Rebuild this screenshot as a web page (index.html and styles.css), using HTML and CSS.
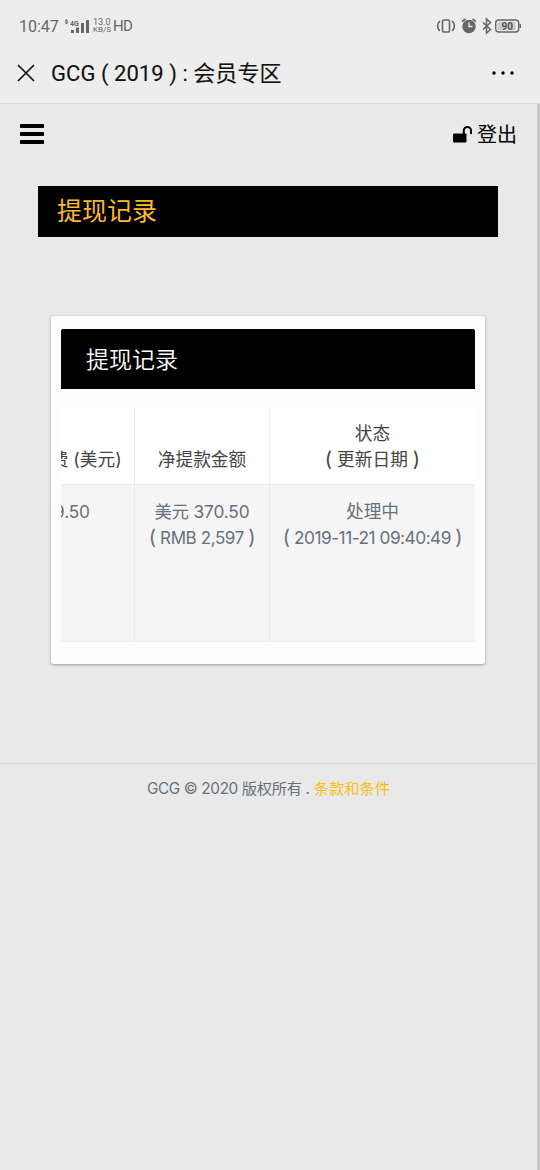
FILE: index.html
```html
<!DOCTYPE html>
<html lang="zh-CN">
<head>
<meta charset="utf-8">
<title>GCG ( 2019 ) : 会员专区</title>
<link rel="stylesheet" href="styles.css">
</head>
<body>
<div class="chrome">
  <div class="status">
    <span class="time">10:47</span>
    <svg class="signal" width="26" height="16" viewBox="0 0 26 16"><path d="M2.500 0 4.500 2.500H.5zM2.500 5.500.5 3.200h4z"/><text x="6" y="6.500">4G</text><path d="M7 11h3v3H7zM12 8.500h3V14h-3zM17 4h3v10h-3zM22 1h3v13h-3z"/></svg>
    <span class="speed"><span class="rate">13.0</span><span>KB/S</span></span>
    <span class="hd">HD</span>
    <svg class="sysicons" width="86" height="18" viewBox="0 0 86 18">
      <g fill="none" stroke="#666" stroke-width="1.600"><rect x="6.500" y="3" width="7" height="12" rx="1.200"/><path d="M3.800 4Q-.6 9 3.800 14M16.200 4q4.400 5 0 10"/><path d="M26 4.500 29.500 2M36.500 2l3.500 2.500" stroke-width="1.600"/><path d="m47 5.500 7.500 7-4 3.500V2l4 3.500-7.500 7" stroke-width="1.500"/></g>
      <circle cx="33" cy="9.500" r="6.700" fill="#666"/><path d="M33 5.500v4h3.500" fill="none" stroke="#eee" stroke-width="1.400"/>
      <rect x="59.700" y="3" width="23" height="12" rx="3" fill="#eee" stroke="#666" stroke-width="1.400"/><rect x="61.500" y="4.700" width="18" height="8.600" rx="1" fill="#ccc"/><path d="M83.500 7h1.500v4h-1.500z" fill="#666"/><text x="65.500" y="12.500" class="bat">90</text>
    </svg>
  </div>
  <div class="titlebar">
    <svg width="18" height="18" viewBox="0 0 18 18"><path d="m1 1 16 16M17 1 1 17" fill="none" stroke="#111" stroke-width="1.700"/></svg>
    <h1>GCG ( 2019 ) : 会员专区</h1>
    <svg class="dots" width="24" height="6" viewBox="0 0 24 6"><circle cx="3" cy="3" r="1.700"/><circle cx="12" cy="3" r="1.700"/><circle cx="21" cy="3" r="1.700"/></svg>
  </div>
</div>
<div class="page">
  <main class="view">
    <nav class="nav">
      <svg width="24" height="20" viewBox="0 0 24 20"><rect width="24" height="4" rx=".7"/><rect y="8" width="24" height="4" rx=".7"/><rect y="16" width="24" height="4" rx=".7"/></svg>
      <a class="logout"><svg width="20" height="17" viewBox="0 0 20 17"><rect x="0" y="7.500" width="13.500" height="9" rx="1.200"/><path d="M10.800 8V4.600a3.600 3.600 0 0 1 7.200 0V7.200" fill="none" stroke="#000" stroke-width="2" stroke-linecap="round"/></svg><span>登出</span></a>
    </nav>
    <h2 class="banner">提现记录</h2>
    <section class="card">
      <h3>提现记录</h3>
      <div class="scroller">
        <div class="grid">
          <div class="th"><span class="fee">手续费 (美元)</span></div>
          <div class="th"><span>净提款金额</span></div>
          <div class="th"><span>状态</span><span class="updated"><i>(</i> 更新日期 <i>)</i></span></div>
          <div class="td"><span class="charge">19.50</span></div>
          <div class="td"><span class="usd">美元 370.50</span><span class="rmb"><i>(</i> RMB 2,597 <i>)</i></span></div>
          <div class="td state"><span>处理中</span><span class="date"><i>(</i> 2019-11-21 09:40:49 <i>)</i></span></div>
        </div>
      </div>
    </section>
    <footer><span class="copy">GCG © 2020 版权所有 . </span><a>条款和条件</a></footer>
  </main>
  <div class="scrollbar"></div>
</div>
</body>
</html>
```
FILE: styles.css
```css
*{box-sizing:border-box}
body{margin:0;width:540px;height:1170px;overflow:hidden;background:#e9e9e9;font-family:Inter,"Noto Sans CJK SC",sans-serif}
h1,h2,h3{margin:0;font-weight:400}
i{font-style:normal;font-size:20px;line-height:20px}
svg{display:block;flex:none}
.chrome{height:104px;background:#ededed;border-bottom:1px solid #dcdcdc;font-family:Roboto,"Noto Sans CJK SC",sans-serif}
.status{height:46px;padding:6px 18px 0 19px;display:flex;align-items:center;color:#666}
.time{font-size:16px;width:45px}
.signal{fill:#666;margin-top:1px}
.signal text{font:bold 7px Roboto,sans-serif}
.speed{display:flex;flex-direction:column;margin-left:3px;width:19px;font-size:8px;line-height:7.500px;font-weight:400}
.rate{font-size:9px}
.hd{font-size:15px;margin-left:1px;letter-spacing:-1px;letter-spacing:-.7px}
.sysicons{margin-left:auto}
.bat{font:bold 10px Roboto,sans-serif;fill:#555}
.titlebar{height:57px;display:flex;align-items:center;padding:0 25px 3px 17px;color:#111}
.titlebar h1{font-size:22px;line-height:30px;margin:2px 0 0 16px;white-space:nowrap;-webkit-text-stroke:.1px #111;letter-spacing:.05px}
.dots{margin-left:auto}
.page{height:1066px;display:flex}
.view{width:537px;flex:none}
.scrollbar{width:3px;background:#c8c8c8}
.nav{height:82px;padding:20px 20px 0;display:flex;justify-content:space-between;align-items:flex-start}
.logout{display:flex;font-size:20px;line-height:22px;gap:4px;align-items:center}
.logout svg{margin-top:-2px}
.banner{width:460px;height:51px;margin-left:38px;padding-left:19px;background:#000;color:#fdb92b;font-size:25px;line-height:50px}
.card{width:434px;height:348px;margin:79px 0 0 51px;padding:13px 10px 0;background:#fdfdfd;border-radius:3px;box-shadow:0 1px 3px rgba(0,0,0,.35)}
.card h3{height:60px;background:#000;border-radius:2px 2px 0 0;color:#fff;font-size:23px;line-height:63px;padding-left:25px;font-weight:350}
.scroller{margin-top:18px;overflow:hidden;display:flex;justify-content:flex-end}
.grid{flex:none;display:grid;grid-template-columns:132px 135px 205px;grid-template-rows:77px 158px}
.th,.td{display:flex;flex-direction:column;align-items:center;font-size:17.700px;line-height:26px;white-space:nowrap;border-right:1px solid #eaeaea}
.th:nth-child(3n),.td:nth-child(3n){border-right:0}
.th{justify-content:flex-end;padding-bottom:11px;background:#fff;color:#444}
.td{padding-top:14px;background:#f5f5f5;border-top:1px solid #ececec;border-bottom:1px solid #eee;color:#66717c}
.th span,.td span{height:26px}
.updated{font-size:17.700px}
.usd{font-size:17.300px;letter-spacing:-.15px}
.charge{font-size:17.300px;letter-spacing:-.15px}
.rmb{font-size:17px;letter-spacing:-.4px}
.date{font-size:17.300px;letter-spacing:-.5px}
footer{margin-top:99px;border-top:1px solid #d9d9d9;height:50px;display:flex;justify-content:center;font-size:15.300px;line-height:50px;color:#66717c;white-space:pre}
.copy{letter-spacing:-.35px}
footer a{color:#fcbd17}
```
